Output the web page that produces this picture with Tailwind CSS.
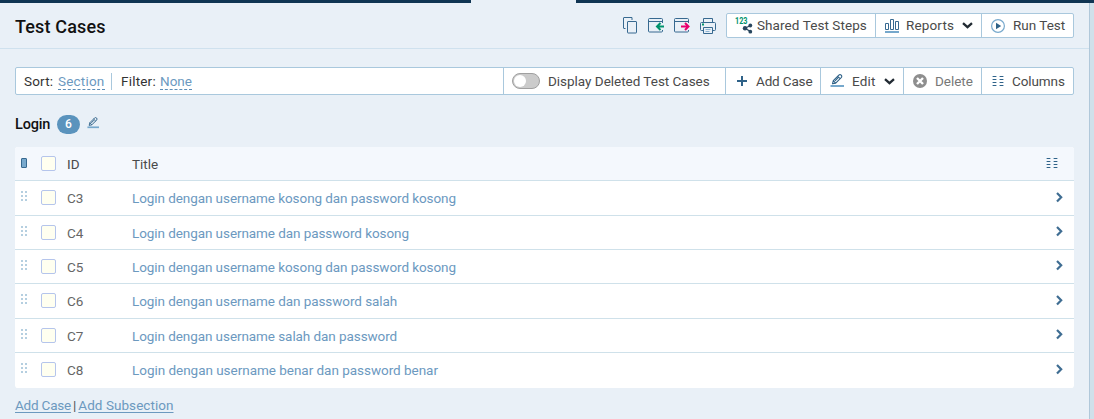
<!DOCTYPE html>
<html lang="en">
<head>
<meta charset="utf-8">
<title>Test Cases</title>
<script src="https://cdn.jsdelivr.net/npm/@tailwindcss/browser@4"></script>
</head>
<body class="h-[419px] w-[1094px] overflow-hidden bg-[#e9f0f7] font-[Roboto,sans-serif] text-[13.5px] leading-[20px] text-[#4a4a4a]">
<svg class="hidden">
  <symbol id="pencil" viewBox="0 0 14 14"><path d="M2.500 9.800 3.300 6.700 8.800 1.200Q10 .1 11.200 1.200 12.300 2.400 11.200 3.600L5.700 9.100ZM3.300 6.700 5.700 9.100M7.700 2.300 10.100 4.700M5 6.900 8.200 3.700" fill="none" stroke="#2f6288" stroke-width="1.100" stroke-linejoin="round"/><path d="M.5 12h13.500" stroke="#76a8cc" stroke-width="2"/></symbol>
  <symbol id="cols" viewBox="0 0 12 11"><path d="M0 .5h5M7 .5h5M0 3.500h5M7 3.500h5M0 6.500h5M7 6.500h5M0 9.500h5M7 9.500h5" stroke="#a5c0d5"/><path d="M1 .5h3M8 .5h3M1 3.500h3M8 3.500h3M1 6.500h3M8 6.500h3M1 9.500h3M8 9.500h3" stroke="#2f6288"/></symbol>
  <symbol id="down" viewBox="0 0 11 7"><path d="M1 1.200 5.500 5.200 10 1.200" fill="none" stroke="#222b33" stroke-width="2.300"/></symbol>
  <symbol id="right" viewBox="0 0 7 11"><path d="M1 1 5.200 5.300 1 9.600" fill="none" stroke="#3f6d92" stroke-width="2.200"/></symbol>
  <symbol id="grip" viewBox="0 0 6 10"><path d="M0 0h2v2H0zM4 0h2v2H4zM0 4h2v2H0zM4 4h2v2H4zM0 8h2v2H0zM4 8h2v2H4z" fill="#b5cfe0"/></symbol>
</svg>
<div class="flex h-[3px]"><div class="w-[471px] bg-[#103553]"></div><div class="w-[105px]"></div><div class="flex-1 bg-[#103553]"></div></div>
<div class="flex h-[416px]">
<main class="w-[1089px]">
  <header class="flex h-[46px] items-start border-b border-[#cfe1ee] pl-[15px] pr-[15px] pt-[10px]">
    <h1 class="mt-[2px] text-[18px] font-medium leading-6 tracking-[0.150px] text-[#111]">Test Cases</h1>
    <div class="ml-auto flex items-center">
      <svg class="mr-[11px] h-[17px] w-[14px]" viewBox="0 0 14 17" fill="none" stroke="#376990"><path d="M2.500 11.500h-1.500q-.5 0-.5-.5V1q0-.5.5-.5h8v2.500M5 4.500h8q.5 0 .5.500v10.500q0 .5-.5.500H5q-.5 0-.5-.5V5q0-.5.500-.5z"/></svg>
      <svg class="mr-[10px] h-[15px] w-[16px]" viewBox="0 0 16 15" fill="none" stroke="#376990"><path d="M14.500 5V1.500q0-1-1-1h-12q-1 0-1 1v11.500q0 1 1 1h12q1 0 1-1v-1M.5 3.500h14"/><path d="M16 8.500H10M12.500 5 9 8.500l3.500 3.500" stroke="#00926c" stroke-width="2"/></svg>
      <svg class="mr-[10px] h-[15px] w-[16px]" viewBox="0 0 16 15" fill="none" stroke="#376990"><path d="M14.500 5V1.500q0-1-1-1h-12q-1 0-1 1v11.500q0 1 1 1h12q1 0 1-1v-1M.5 3.500h14"/><path d="M7 8.500h7M11 5l3.500 3.500L11 12" stroke="#e8006f" stroke-width="2"/></svg>
      <svg class="mr-[10px] h-[16px] w-[16px]" viewBox="0 0 16 16" fill="none" stroke="#376990"><path d="M3.500 4V.5h9V4M3.500 12.500h-2q-1 0-1-1V5.500q0-1 1-1h13q1 0 1 1v6q0 1-1 1h-2M3.500 9.500h9v6h-9z"/><path d="M5.500 11.500h5M5.500 13.500h4" stroke="#8cb4d3"/><path d="M2 6.500h2" stroke="#00926c" stroke-width="2"/></svg>
      <div class="flex h-[25px] w-[348px] rounded-[2px] border border-[#a9c8dd] bg-white leading-[23px] whitespace-nowrap">
        <div class="flex w-[149px] items-center border-r border-[#a9c8dd] pl-[8px]">
          <svg class="mr-[4px] h-[17px] w-[18px]" viewBox="0 0 18 17"><text x="0" y="6.500" font-family="Roboto" font-weight="700" font-size="8.800" textLength="12.500" lengthAdjust="spacingAndGlyphs" fill="#00926c">123</text><path d="M15.500 8.500 10 11.200l5.500 3.300" fill="none" stroke="#28465e" stroke-width="1.200"/><g fill="#28465e"><circle cx="15.300" cy="8.500" r="1.900"/><circle cx="10" cy="11.200" r="2.200"/><circle cx="15.300" cy="14.700" r="1.900"/></g></svg>
          <span class="tracking-[0.080px]">Shared Test Steps</span></div>
        <div class="flex w-[106px] items-center border-r border-[#a9c8dd] pl-[9px]">
          <svg class="mr-[7px] h-[14px] w-[14px]" viewBox="0 0 14 14" fill="none" stroke="#376990"><path d="M.5 4.500h3v6h-3zM5.500.5h3v10h-3zM10.500 2.500h3v8h-3z"/><path d="M0 13h14" stroke="#76a8cc" stroke-width="2"/></svg>
          <span class="w-[48px] tracking-[0.150px]">Reports</span><svg class="ml-[8px] h-[7px] w-[11px]"><use href="#down"/></svg></div>
        <div class="flex items-center pl-[9px]">
          <svg class="mr-[8px] h-[14px] w-[14px]" viewBox="0 0 14 14"><circle cx="7" cy="7" r="6.400" fill="none" stroke="#78a9cd" stroke-width="1.200"/><path d="M5 3.800v6.400L10.200 7z" fill="#2f6288"/></svg>
          <span>Run Test</span></div>
      </div>
    </div>
  </header>
  <div class="px-[15px] pt-[18px]">
    <div class="flex h-[28px] rounded-[2px] border border-[#a9c8dd] bg-white whitespace-nowrap">
      <div class="flex w-[488px] items-center border-r border-[#a9c8dd] pl-[8px] text-[#333]">
        <span class="w-[34px] tracking-[0.200px]">Sort:</span><a class="h-[18px] w-[47px] border-b border-dashed border-[#5b8db8] leading-[18px] tracking-[0.200px] text-[#6c99bf]">Section</a>
        <div class="ml-[6px] mr-[9px] h-[17px] w-px bg-[#a9c8dd]"></div>
        <span class="w-[39px] tracking-[0.200px]">Filter:</span><a class="h-[18px] w-[32px] border-b border-dashed border-[#5b8db8] leading-[18px] text-[#6c99bf]">None</a>
      </div>
      <div class="flex w-[222px] items-center border-r border-[#a9c8dd] pl-[8px]"><div class="mr-[8px] h-[16px] w-[28px] rounded-full border border-[#a0a0a0] bg-[#cbcbcb] p-px"><div class="size-[12px] rounded-full bg-white"></div></div><span class="tracking-[-0.020px]">Display Deleted Test Cases</span></div>
      <div class="flex w-[95px] items-center border-r border-[#a9c8dd] pl-[11px]"><svg class="mr-[9px] h-[10px] w-[10px]" viewBox="0 0 10 10"><path d="M0 5h10M5 0v10" stroke="#2f6288" stroke-width="2"/></svg><span class="tracking-[-0.150px]">Add Case</span></div>
      <div class="flex w-[83px] items-center border-r border-[#a9c8dd] pl-[9px]"><svg class="mr-[8px] size-[14px]"><use href="#pencil"/></svg><span class="w-[25px] tracking-[0.200px]">Edit</span><svg class="ml-[7px] h-[7px] w-[11px]"><use href="#down"/></svg></div>
      <div class="flex w-[78px] items-center border-r border-[#a9c8dd] pl-[9px] text-[#777]"><svg class="mr-[8px] size-[14px]" viewBox="0 0 14 14"><circle cx="7" cy="7" r="7" fill="#8e8e8e"/><path d="m4 4 6 6M10 4l-6 6" stroke="#fff" stroke-width="2.400"/></svg><span class="tracking-[-0.050px]">Delete</span></div>
      <div class="flex items-center pl-[10px]"><svg class="mr-[8px] h-[11px] w-[12px]"><use href="#cols"/></svg><span class="tracking-[-0.100px]">Columns</span></div>
    </div>
    <div class="flex h-[52px] items-center pt-[6px]">
      <h2 class="mt-[2px] w-[42px] text-[14.5px] tracking-[-0.200px] font-medium text-[#111]">Login</h2>
      <span class="flex h-[19px] w-[23px] items-center justify-center rounded-full bg-[#5a93bd] text-[12px] font-medium text-white">6</span>
      <svg class="ml-[7px] mb-[2px] size-[12px]"><use href="#pencil"/></svg>
    </div>
    <div id="cases" class="overflow-hidden rounded-[3px] bg-white">
      <div class="flex h-[34px] items-center border-b border-[#cfe1ea] bg-[#f4f8fd] pl-[6px]">
        <div class="mr-[14px] mb-[2px] h-[10px] w-[6px] rounded-[1px] border border-[#376990] bg-[#78a9cd]"></div>
        <div class="mr-[11px] size-[15px] rounded-[2px] border border-[#b5c5ec] bg-[#fffff0]"></div>
        <span class="w-[65px]">ID</span><span>Title</span>
        <svg class="ml-auto mr-[16px] h-[11px] w-[12px]"><use href="#cols"/></svg>
      </div>
    </div>
    <div class="mt-[8px] flex h-[18px] items-center gap-[2px] leading-[18px] text-[#6c99bf]"><a class="tracking-[-0.200px] underline underline-offset-2">Add Case</a><span class="text-[#555]">|</span><a class="tracking-[0.050px] underline underline-offset-2">Add Subsection</a></div>
  </div>
</main>
<aside class="w-[5px] border-l border-[#b0c8da] bg-[#d0e0ea]"></aside>
</div>
<script>
const rows = [
  ['C3', 'Login dengan username kosong dan password kosong', 35],
  ['C4', 'Login dengan username dan password kosong', 34],
  ['C5', 'Login dengan username kosong dan password kosong', 34],
  ['C6', 'Login dengan username dan password salah', 35],
  ['C7', 'Login dengan username salah dan password', 34],
  ['C8', 'Login dengan username benar dan password benar', 35],
];
document.getElementById('cases').insertAdjacentHTML('beforeend', rows.map(([id, title, h]) => `
  <div class="group flex items-center border-b border-[#cfe1ea] pl-[6px] last:border-white" style="height:${h}px">
    <svg class="mr-[14px] mb-[4px] h-[10px] w-[6px]"><use href="#grip"/></svg>
    <div class="mr-[11px] mb-px size-[15px] rounded-[2px] border border-[#b5c5ec] bg-[#fffff0]"></div>
    <span class="w-[65px] text-[#666]">${id}</span><a class="tracking-[-0.075px] group-last:tracking-[-0.030px] text-[#6c99bf]">${title}</a>
    <svg class="ml-auto mr-[11px] mb-[2px] h-[11px] w-[7px]"><use href="#right"/></svg>
  </div>`).join(''));
</script>
</body>
</html>
